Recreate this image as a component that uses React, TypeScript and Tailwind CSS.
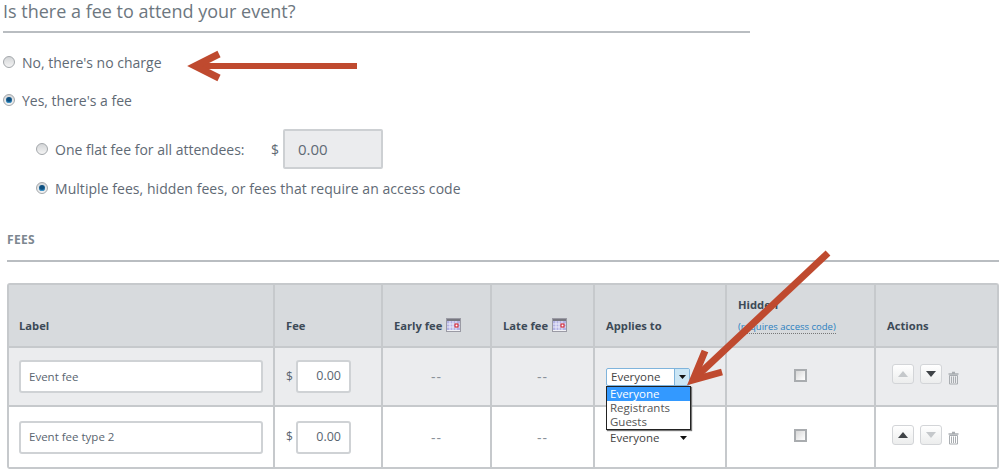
const font = { fontFamily: '"Open Sans", "Liberation Sans", sans-serif' };

function Radio({ checked }: { checked?: boolean }) {
  return (
    <span className="grid h-[12px] w-[12px] shrink-0 place-items-center rounded-full border border-[#a3a7ab] bg-gradient-to-b from-[#d4d6d8] to-[#f4f4f4]">
      {checked && <span className="h-[6px] w-[6px] rounded-full bg-[#0f4f7f] shadow-[inset_0_-1px_1px_#3fa0d8]" />}
    </span>
  );
}

function CalendarIcon() {
  return (
    <svg width="15" height="14" viewBox="0 0 15 14" className="shrink-0">
      <rect x="0.5" y="0.5" width="14" height="13" fill="#f1f1f5" stroke="#9a9aa4" />
      <rect x="1" y="1" width="13" height="2" fill="#77777f" />
      <rect x="1" y="3" width="13" height="9" fill="#b3b3e6" />
      <path d="M4 3v9M7 3v9M10 3v9M1 6h13M1 9h13" stroke="#ececf8" strokeWidth="1" />
      <rect x="9" y="6" width="3" height="3" fill="#fff" stroke="#d01020" />
    </svg>
  );
}

function TrashIcon() {
  return (
    <svg width="11" height="14" viewBox="0 0 11 14" className="mt-[7px] shrink-0" fill="none" stroke="#a9adb1">
      <path d="M4 1.5h3M0.5 3h10" strokeWidth="1.3" />
      <path d="M1.5 4.5h8v8.5h-8z" strokeWidth="1" />
      <path d="M3.500 5.500v6.500M5.500 5.500v6.500M7.500 5.500v6.500" strokeWidth="1" />
    </svg>
  );
}

function MoveButton({ dir, active }: { dir: "up" | "down"; active?: boolean }) {
  const fill = active ? "#3f4347" : "#c5c8cb";
  return (
    <span className="grid h-[20px] w-[22px] place-items-center rounded-[3px] border border-[#d3d5d8] bg-gradient-to-b from-white to-[#eceded]">
      <svg width="10" height="6" viewBox="0 0 10 6">
        <path d={dir === "up" ? "M5 0l5 6H0z" : "M0 0h10L5 6z"} fill={fill} />
      </svg>
    </span>
  );
}

function Checkbox() {
  return <span className="h-[13px] w-[13px] border-2 border-[#a9acaf] bg-gradient-to-br from-[#d8d8d8] to-white" />;
}

function SelectArrow() {
  return (
    <svg width="7" height="4" viewBox="0 0 7 4">
      <path d="M0 0h7L3.500 4z" fill="#111" />
    </svg>
  );
}

const cols = "grid grid-cols-[264px_108px_109px_103px_132px_149px_1fr]";
const cell = "flex items-center border-l-2 border-[#c6c9cc]";
const headCell = "flex items-center border-l-2 border-[#c6c9cc] pl-[11px] pt-[22px] text-[11.200px] font-bold text-[#3d4a57]";
const dashes = "justify-center text-[14px] tracking-[1px] text-[#8a9199]";

function FeeRow({ name, shaded, upActive, downActive, open }: { name: string; shaded?: boolean; upActive?: boolean; downActive?: boolean; open?: boolean }) {
  return (
    <div className={`${cols} text-[11.500px] text-[#5a6570] ${shaded ? "h-[59px] bg-[#ebecee]" : "h-[62px] bg-white"} border-b-2 border-[#c6c9cc]`}>
      <div className="flex items-center pl-[10px]">
        <div className="flex h-[33px] w-[244px] items-center rounded-[3px] border-2 border-[#cfd2d5] bg-white pl-[8px]">{name}</div>
      </div>
      <div className={`${cell} pl-[11px]`}>
        <span className="w-[10px] text-[12px]">$</span>
        <div className="flex h-[33px] w-[55px] items-center justify-end rounded-[3px] border-2 border-[#cfd2d5] bg-white pr-[8px] text-[12.500px]">0.00</div>
      </div>
      <div className={`${cell} ${dashes}`}>--</div>
      <div className={`${cell} ${dashes}`}>--</div>
      <div className={`${cell} relative pl-[11px]`}>
        {open ? (
          <div className="flex h-[18px] w-[84px] items-center justify-between rounded-[2px] border border-[#7fb4dc] bg-white pl-[4px] text-[#444]">
            Everyone
            <span className="grid h-full w-[15px] place-items-center border-l border-[#7fb4dc] bg-[#cbe6f5]">
              <SelectArrow />
            </span>
          </div>
        ) : (
          <div className="mt-[2px] flex h-[17px] w-[84px] items-center justify-between rounded-[2px] bg-white pl-[4px] pr-[3px] text-[#444]">
            Everyone
            <SelectArrow />
          </div>
        )}
        {open && (
          <div className="absolute left-[11px] top-[38px] z-10 w-[85px] border border-[#222] bg-white leading-[14px] text-[#555] shadow-[1px_1px_1px_#777]">
            <div className="bg-[#3399ff] pl-[3px] text-white">Everyone</div>
            <div className="pl-[3px]">Registrants</div>
            <div className="pl-[3px]">Guests</div>
          </div>
        )}
      </div>
      <div className={`${cell} justify-center pb-[3px]`}>
        <Checkbox />
      </div>
      <div className={`${cell} gap-[6px] pb-[5px] pl-[16px]`}>
        <MoveButton dir="up" active={upActive} />
        <MoveButton dir="down" active={downActive} />
        <TrashIcon />
      </div>
    </div>
  );
}

export default function App() {
  return (
    <div className="relative h-[469px] w-[999px] overflow-hidden bg-white text-[#5f6a75]" style={font}>
      <div className="ml-[3px] h-[33px] w-[747px] border-b-2 border-[#b9bdc1] text-[18px] leading-[22px] text-[#6d7780]">
        Is there a fee to attend your event?
      </div>

      <div className="mt-[20px] flex h-[18px] items-center gap-[7px] pl-[3px] text-[14px]">
        <Radio />
        No, there's no charge
      </div>
      <div className="mt-[20px] flex h-[18px] items-center gap-[7px] pl-[3px] text-[14px]">
        <Radio checked />
        Yes, there's a fee
      </div>

      <div className="mt-[20px] flex h-[40px] items-center pl-[36px] text-[14px]">
        <Radio />
        <span className="ml-[7px] w-[216px]">One flat fee for all attendees:</span>
        <span className="w-[12px]">$</span>
        <div className="flex h-[40px] w-[100px] items-center rounded-[2px] border-2 border-[#cdd0d3] bg-[#ebecee] pl-[13px] text-[15px]">0.00</div>
      </div>
      <div className="mt-[10px] flex h-[18px] items-center gap-[7px] pl-[36px] text-[14px] tracking-[0.05px]">
        <Radio checked />
        Multiple fees, hidden fees, or fees that require an access code
      </div>

      <div className="ml-[7px] mt-[34px] flex h-[31px] w-[992px] items-start border-b-2 border-[#b9bdc1] text-[12px] font-bold tracking-[0.3px] text-[#7d8790]">
        FEES
      </div>

      <div className="ml-[7px] mt-[21px] w-[992px] overflow-visible rounded-[3px] border-x-2 border-t-2 border-[#c6c9cc]">
        <div className={`${cols} h-[63px] border-b-2 border-[#c6c9cc] bg-[#d7dadd]`}>
          <div className="flex items-center pl-[10px] pt-[22px] text-[11.200px] font-bold text-[#3d4a57]">Label</div>
          <div className={headCell}>Fee</div>
          <div className={headCell}>
            <span className="mr-[4px]">Early fee</span>
            <span className="mb-[4px]"><CalendarIcon /></span>
          </div>
          <div className={headCell}>
            <span className="mr-[4px]">Late fee</span>
            <span className="mb-[4px]"><CalendarIcon /></span>
          </div>
          <div className={headCell}>Applies to</div>
          <div className="flex flex-col border-l-2 border-[#c6c9cc] pl-[11px] pt-[12px]">
            <span className="text-[11.200px] font-bold text-[#3d4a57]">Hidden</span>
            <span className="mt-[7px] w-fit border-b border-dotted border-[#777] text-[9.500px] leading-[12px] text-[#2a7fc0]">(requires access code)</span>
          </div>
          <div className={headCell}>Actions</div>
        </div>
        <FeeRow name="Event fee" shaded downActive open />
        <FeeRow name="Event fee type 2" upActive />
      </div>

      <svg className="pointer-events-none absolute left-0 top-0 z-20" width="999" height="469" viewBox="0 0 999 469" fill="none" stroke="#bf4a2f">
        <path d="M357 66H198" strokeWidth="6" />
        <path d="M219 54L195 66L219 78" strokeWidth="7" />
        <path d="M828 253L697 376" strokeWidth="7" />
        <path d="M705 351L693 380L722 372" strokeWidth="7" />
      </svg>
    </div>
  );
}
